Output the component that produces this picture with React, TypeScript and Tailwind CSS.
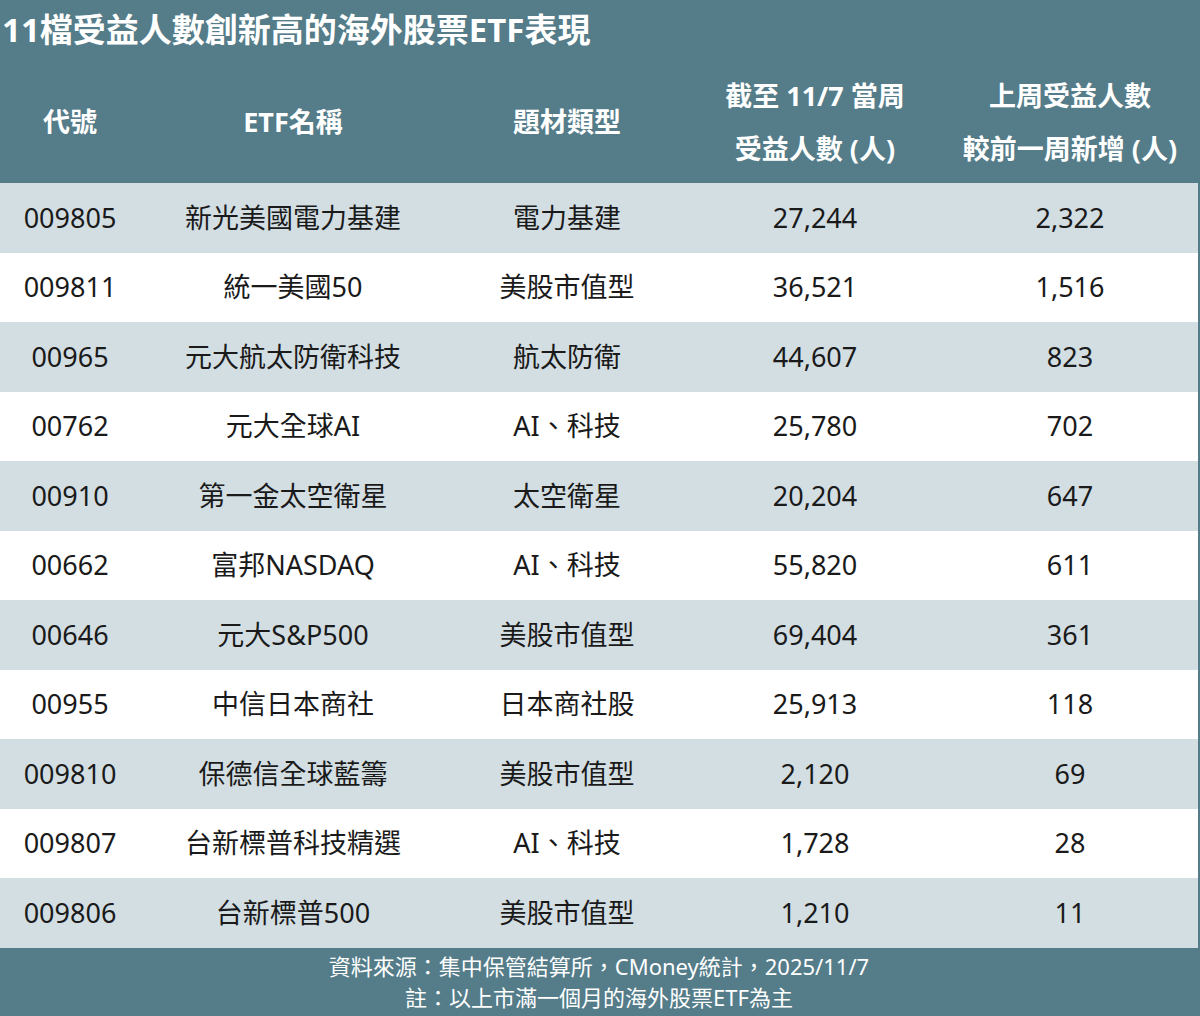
const rows = [
  ["009805", "新光美國電力基建", "電力基建", "27,244", "2,322"],
  ["009811", "統一美國50", "美股市值型", "36,521", "1,516"],
  ["00965", "元大航太防衛科技", "航太防衛", "44,607", "823"],
  ["00762", "元大全球AI", "AI、科技", "25,780", "702"],
  ["00910", "第一金太空衛星", "太空衛星", "20,204", "647"],
  ["00662", "富邦NASDAQ", "AI、科技", "55,820", "611"],
  ["00646", "元大S&P500", "美股市值型", "69,404", "361"],
  ["00955", "中信日本商社", "日本商社股", "25,913", "118"],
  ["009810", "保德信全球藍籌", "美股市值型", "2,120", "69"],
  ["009807", "台新標普科技精選", "AI、科技", "1,728", "28"],
  ["009806", "台新標普500", "美股市值型", "1,210", "11"],
];

const cols = "grid grid-cols-[140px_306px_242px_254px_256px]";

export default function App() {
  return (
    <div
      className="w-[1200px] h-[1016px] bg-[#547c89] flex flex-col"
      style={{ fontFamily: '"Noto Sans", "Noto Sans CJK TC", sans-serif' }}
    >
      <div className="h-[60px] w-[1198px] flex items-center pl-[2px] text-white text-[33px] font-bold">
        11檔受益人數創新高的海外股票ETF表現
      </div>
      <div className={`${cols} h-[123px] w-[1198px] text-white text-[27px] font-bold items-center text-center leading-[53px]`}>
        <div>代號</div>
        <div>ETF名稱</div>
        <div>題材類型</div>
        <div>
          截至 11/7 當周
          <br />
          受益人數 (人)
        </div>
        <div>
          上周受益人數
          <br />
          較前一周新增 (人)
        </div>
      </div>
      {rows.map((r, i) => (
        <div
          key={r[0]}
          className={`${cols} h-[69.55px] w-[1198px] items-center text-center text-[27px] text-[#1a1a1a] ${
            i % 2 === 0 ? "bg-[#d3dee3]" : "bg-white"
          }`}
        >
          {r.map((c, j) => (
            <div key={j}>{c}</div>
          ))}
        </div>
      ))}
      <div className="flex-1 w-[1198px] flex flex-col items-center justify-center text-white text-[22px] leading-[31px]">
        <div>資料來源：集中保管結算所，CMoney統計，2025/11/7</div>
        <div>註：以上市滿一個月的海外股票ETF為主</div>
      </div>
    </div>
  );
}
